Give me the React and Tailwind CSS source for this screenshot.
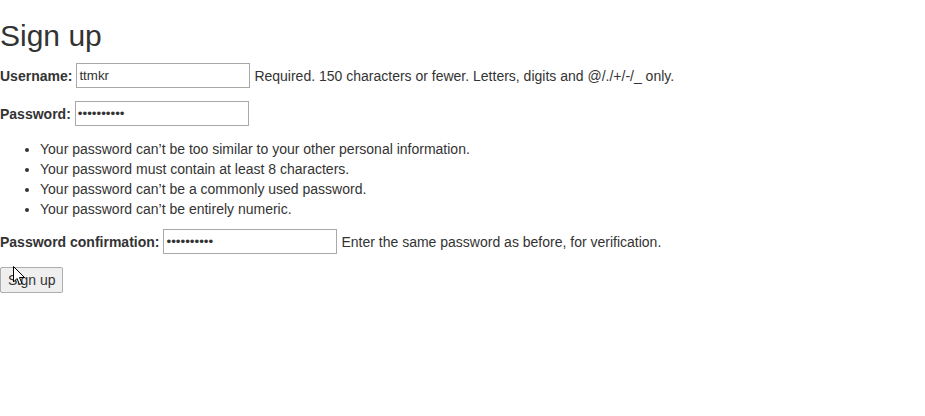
import React from "react";

function Cursor() {
  return (
    <svg
      className="absolute left-[13px] top-[266px] pointer-events-none"
      width="13"
      height="20"
      viewBox="0 0 13 20"
    >
      <path
        d="M0.5 0.5 L0.5 16 L4 12.5 L6.5 18.5 L9 17.5 L6.5 11.5 L11.5 11.5 Z"
        fill="white"
        stroke="black"
        strokeWidth="1"
        strokeLinejoin="miter"
      />
    </svg>
  );
}

export default function App() {
  const inputCls =
    "w-[174px] h-[25px] border border-[#a9a9a9] px-[2px] text-[13.33px] text-[#333] outline-none bg-white";
  return (
    <div
      className="relative min-h-[416px] bg-white text-[#333] text-[14px] leading-[20px]"
      style={{ fontFamily: '"Liberation Sans", Arial, sans-serif' }}
    >
      <h1 className="text-[30px] leading-[36px] pt-[18px] font-normal">Sign up</h1>
      <div className="flex items-center h-[25px] mt-[9px]">
        <label className="font-bold mr-[4px]">Username:</label>
        <input className={inputCls} type="text" defaultValue="ttmkr" readOnly />
        <span className="ml-[4px]">
          Required. 150 characters or fewer. Letters, digits and @/./+/-/_ only.
        </span>
      </div>
      <div className="flex items-center h-[25px] mt-[13px]">
        <label className="font-bold mr-[4px]">Password:</label>
        <input className={inputCls} type="password" defaultValue="ttmkr12345" readOnly />
      </div>
      <ul className="list-disc pl-[40px] mt-[13px]">
        <li>Your password can’t be too similar to your other personal information.</li>
        <li>Your password must contain at least 8 characters.</li>
        <li>Your password can’t be a commonly used password.</li>
        <li>Your password can’t be entirely numeric.</li>
      </ul>
      <div className="flex items-center h-[25px] mt-[10px]">
        <label className="font-bold mr-[4px]">Password confirmation:</label>
        <input className={inputCls} type="password" defaultValue="ttmkr12345" readOnly />
        <span className="ml-[4px]">Enter the same password as before, for verification.</span>
      </div>
      <div className="mt-[13px]">
        <button className="h-[26px] px-[7px] border border-[#adadad] bg-[#efefef] rounded-[2px] text-[14px] text-[#333]">
          Sign up
        </button>
      </div>
      <Cursor />
    </div>
  );
}
